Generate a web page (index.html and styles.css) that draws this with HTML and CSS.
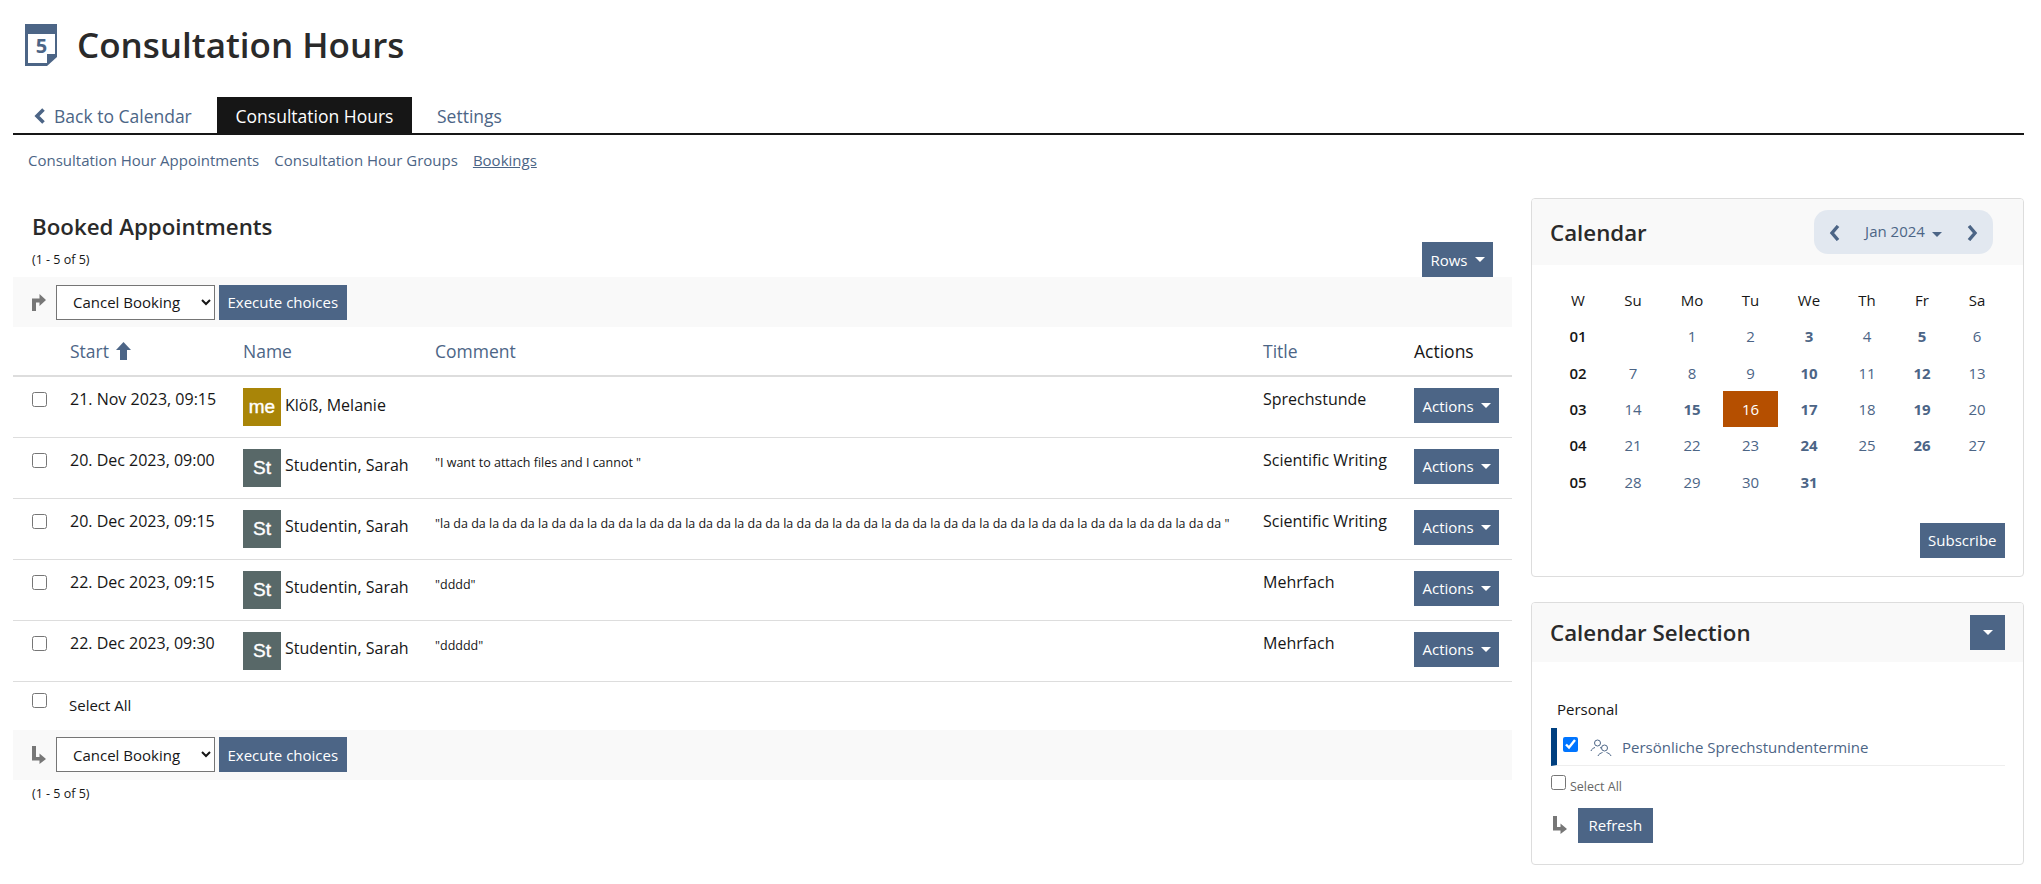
FILE: index.html
```html
<!DOCTYPE html>
<html lang="en">
<head>
<meta charset="utf-8">
<title>Consultation Hours</title>
<link rel="stylesheet" href="styles.css">
</head>
<body>
<svg class="defs" width="0" height="0">
  <symbol id="chev-l" viewBox="0 0 12 16"><path d="M9 1 3 8l6 7" fill="none" stroke="currentColor" stroke-width="3.400"/></symbol>
  <symbol id="chev-r" viewBox="0 0 12 16"><path d="M3 1l6 7-6 7" fill="none" stroke="currentColor" stroke-width="3.400"/></symbol>
</svg>

<header class="page-title">
  <svg class="title-icon" viewBox="0 0 32 42" aria-hidden="true">
    <path d="M0 0h32v33l-10 9H0z" fill="#4c6586"/>
    <path d="M3 10h27v20h-8v9H3z" fill="#fff"/>
    <text class="title-icon-num" x="16.500" y="29" text-anchor="middle">5</text>
  </svg>
  <h1>Consultation Hours</h1>
</header>

<nav class="tabs">
  <a class="tab tab-back"><svg class="back-chev" viewBox="0 0 12 16"><path d="M9.500 1.500 3 8l6.500 6.500" fill="none" stroke="currentColor" stroke-width="3.600"/></svg>Back to Calendar</a>
  <a class="tab tab-active">Consultation Hours</a>
  <a class="tab">Settings</a>
</nav>
<nav class="subtabs">
  <a>Consultation Hour Appointments</a>
  <a>Consultation Hour Groups</a>
  <a class="current">Bookings</a>
</nav>

<div class="columns">
  <main class="main">
    <div class="table-head">
      <div>
        <h2>Booked Appointments</h2>
        <div class="count">(1 - 5 of 5)</div>
      </div>
      <button class="btn">Rows<span class="caret"></span></button>
    </div>
    <div class="toolbar">
      <svg class="turn" viewBox="0 0 16 18"><path d="M2 18V5.500h7.500V1L16 7l-6.500 6V9.500H6V18z" fill="#777"/></svg>
      <select class="action-select"><option>Cancel Booking</option></select>
      <button class="btn">Execute choices</button>
    </div>
    <table class="bookings">
      <colgroup>
        <col class="c-check"><col class="c-start"><col class="c-name"><col class="c-comment"><col class="c-title"><col class="c-actions">
      </colgroup>
      <thead>
        <tr>
          <th></th>
          <th>Start <svg class="sort" viewBox="0 0 15 18"><path d="M7.500 0 15 8h-4v10H4V8H0z" fill="#4c6586"/></svg></th>
          <th>Name</th>
          <th>Comment</th>
          <th>Title</th>
          <th class="dark">Actions</th>
        </tr>
      </thead>
      <tbody>
        <tr>
          <td><input type="checkbox" class="cb"></td>
          <td>21. Nov 2023, 09:15</td>
          <td><div class="person"><span class="avatar gold">me</span><span class="person-name">Klöß, Melanie</span></div></td>
          <td class="comment"></td>
          <td>Sprechstunde</td>
          <td><button class="btn">Actions<span class="caret"></span></button></td>
        </tr>
        <tr>
          <td><input type="checkbox" class="cb"></td>
          <td>20. Dec 2023, 09:00</td>
          <td><div class="person"><span class="avatar slate">St</span><span class="person-name">Studentin, Sarah</span></div></td>
          <td class="comment">"I want to attach files and I cannot "</td>
          <td>Scientific Writing</td>
          <td><button class="btn">Actions<span class="caret"></span></button></td>
        </tr>
        <tr>
          <td><input type="checkbox" class="cb"></td>
          <td>20. Dec 2023, 09:15</td>
          <td><div class="person"><span class="avatar slate">St</span><span class="person-name">Studentin, Sarah</span></div></td>
          <td class="comment">"la da da la da da la da da la da da la da da la da da la da da la da da la da da la da da la da da la da da la da da la da da la da da la da da "</td>
          <td>Scientific Writing</td>
          <td><button class="btn">Actions<span class="caret"></span></button></td>
        </tr>
        <tr>
          <td><input type="checkbox" class="cb"></td>
          <td>22. Dec 2023, 09:15</td>
          <td><div class="person"><span class="avatar slate">St</span><span class="person-name">Studentin, Sarah</span></div></td>
          <td class="comment">"dddd"</td>
          <td>Mehrfach</td>
          <td><button class="btn">Actions<span class="caret"></span></button></td>
        </tr>
        <tr>
          <td><input type="checkbox" class="cb"></td>
          <td>22. Dec 2023, 09:30</td>
          <td><div class="person"><span class="avatar slate">St</span><span class="person-name">Studentin, Sarah</span></div></td>
          <td class="comment">"ddddd"</td>
          <td>Mehrfach</td>
          <td><button class="btn">Actions<span class="caret"></span></button></td>
        </tr>
      </tbody>
    </table>
    <div class="select-all"><input type="checkbox" class="cb"><span>Select All</span></div>
    <div class="toolbar">
      <svg class="turn" viewBox="0 0 16 18"><path d="M2 0h4v11h3.500V7.500L16 13l-6.500 5v-3.500H2z" fill="#777"/></svg>
      <select class="action-select"><option>Cancel Booking</option></select>
      <button class="btn">Execute choices</button>
    </div>
    <div class="count count-bottom">(1 - 5 of 5)</div>
  </main>

  <aside class="side">
    <section class="card">
      <div class="card-head cal-head">
        <h3>Calendar</h3>
        <div class="month-nav">
          <svg class="nav-chev"><use href="#chev-l"/></svg>
          <span class="month">Jan 2024<span class="caret"></span></span>
          <svg class="nav-chev"><use href="#chev-r"/></svg>
        </div>
      </div>
      <div class="cal-body">
        <table class="cal">
          <thead>
            <tr><th>W</th><th>Su</th><th>Mo</th><th>Tu</th><th>We</th><th>Th</th><th>Fr</th><th>Sa</th></tr>
          </thead>
          <tbody>
            <tr><th>01</th><td></td><td>1</td><td>2</td><td class="has">3</td><td>4</td><td class="has">5</td><td>6</td></tr>
            <tr><th>02</th><td>7</td><td>8</td><td>9</td><td class="has">10</td><td>11</td><td class="has">12</td><td>13</td></tr>
            <tr><th>03</th><td>14</td><td class="has">15</td><td class="today">16</td><td class="has">17</td><td>18</td><td class="has">19</td><td>20</td></tr>
            <tr><th>04</th><td>21</td><td>22</td><td>23</td><td class="has">24</td><td>25</td><td class="has">26</td><td>27</td></tr>
            <tr><th>05</th><td>28</td><td>29</td><td>30</td><td class="has">31</td><td></td><td></td><td></td></tr>
          </tbody>
        </table>
        <div class="cal-foot"><button class="btn">Subscribe</button></div>
      </div>
    </section>

    <section class="card">
      <div class="card-head sel-head">
        <h3>Calendar Selection</h3>
        <button class="btn btn-square"><span class="caret"></span></button>
      </div>
      <div class="sel-body">
        <div class="group-label">Personal</div>
        <div class="cal-row">
          <input type="checkbox" class="cb" checked>
          <svg class="people" viewBox="0 0 22 18" aria-hidden="true">
            <g fill="none" stroke="#4c6586" stroke-width="1">
              <circle cx="7.500" cy="4" r="3"/>
              <path d="M1 12c.5-2 2.500-3 4-3.500M10 8.500l1 .5"/>
              <circle cx="14.500" cy="9" r="3"/>
              <path d="M8 17c.5-2 3-3 4.500-3.500M16.500 13.500c1.500.5 4 1.500 4.500 3.500"/>
            </g>
          </svg>
          <span class="cal-name">Persönliche Sprechstundentermine</span>
        </div>
        <label class="sel-all"><input type="checkbox" class="cb"><span>Select All</span></label>
        <div class="refresh-row">
          <svg class="turn turn-side" viewBox="0 0 16 18"><path d="M2 0h4v11h3.500V7.500L16 13l-6.500 5v-3.500H2z" fill="#777"/></svg>
          <button class="btn btn-refresh">Refresh</button>
        </div>
      </div>
    </section>
  </aside>
</div>
</body>
</html>
```

FILE: styles.css
```css
* { box-sizing: border-box; }
html, body { margin: 0; padding: 0; }
body {
  font-family: "Open Sans", sans-serif;
  font-size: 15px;
  color: #161616;
  background: #fff;
  padding-bottom: 18px;
}
.defs { position: absolute; }
h1, h2, h3 { margin: 0; }

.page-title {
  display: flex;
  align-items: center;
  height: 42px;
  margin: 24px 0 31px 25px;
  gap: 20px;
}
.title-icon { width: 32px; height: 42px; flex: none; }
.title-icon-num { font: 700 20px "Open Sans", sans-serif; fill: #4c6586; }
h1 { font-size: 35px; font-weight: 600; line-height: 42px; color: #2a2a2a; }

.tabs {
  display: flex;
  align-items: stretch;
  height: 38px;
  margin: 0 17px 0 13px;
  border-bottom: 2px solid #161616;
}
.tab {
  display: flex;
  align-items: center;
  padding: 2px 19px 0;
  font-size: 17.500px;
  color: #4c6586;
  white-space: nowrap;
}
.tab-back { padding-left: 21px; padding-right: 25px; width: 204px; }
.back-chev { width: 12px; height: 16px; margin-right: 8px; flex: none; }
.tab-active { background: #161616; color: #fff; width: 195px; justify-content: center; padding: 2px 0 0; margin-right: 6px; }

.subtabs {
  display: flex;
  gap: 15px;
  margin: 15px 0 0 28px;
  height: 20px;
  line-height: 20px;
  font-size: 15px;
  color: #4c6586;
}
.subtabs .current { text-decoration: underline; }

.columns {
  display: flex;
  gap: 19px;
  margin: 28px 17px 0 13px;
  align-items: flex-start;
}
.main { width: 1499px; flex: none; }
.side { flex: 1; display: flex; flex-direction: column; gap: 25px; }

.table-head {
  display: flex;
  justify-content: space-between;
  align-items: flex-end;
  padding: 14px 19px 0 19px;
  height: 79px;
}
h2 { font-size: 22.300px; font-weight: 600; line-height: 30px; color: #2a2a2a; }
.count { font-size: 12.500px; line-height: 16px; margin: 10px 0 9px 0; }
.count-bottom { margin: 6px 0 0 19px; }

.btn {
  display: inline-flex;
  align-items: center;
  justify-content: center;
  height: 35px;
  border: 0;
  border-radius: 0;
  padding: 0 8.500px;
  background: #4c6586;
  color: #fff;
  font: 400 15px "Open Sans", sans-serif;
  white-space: nowrap;
}
.btn-refresh { padding: 0 10.500px; }
.caret {
  display: inline-block;
  width: 0;
  height: 0;
  margin-left: 7px;
  border-top: 5px solid currentColor;
  border-left: 5px solid transparent;
  border-right: 5px solid transparent;
}

.toolbar {
  display: flex;
  align-items: center;
  height: 50px;
  background: #f9f9f9;
  padding-left: 17px;
}
.turn { width: 16px; height: 18px; flex: none; margin-right: 10px; }
.action-select {
  width: 159px;
  height: 35px;
  margin-right: 4px;
  padding-left: 12px;
  border: 1px solid #757575;
  border-radius: 0;
  background: #fff;
  color: #161616;
  font: 400 15px "Open Sans", sans-serif;
}

.bookings { width: 100%; border-collapse: collapse; table-layout: fixed; }
.c-check { width: 57px; }
.c-start { width: 173px; }
.c-name { width: 192px; }
.c-comment { width: 828px; }
.c-title { width: 151px; }
.bookings th {
  height: 49px;
  padding: 0;
  border-bottom: 2px solid #ddd;
  text-align: left;
  font-size: 17.500px;
  font-weight: 400;
  color: #4c6586;
  vertical-align: middle;
}
.bookings th.dark { color: #161616; }
.sort { width: 15px; height: 18px; vertical-align: -2px; margin-left: 2px; }
.bookings td {
  height: 61px;
  padding: 11px 0 0;
  border-bottom: 1px solid #ddd;
  vertical-align: top;
  font-size: 16px;
  line-height: 22px;
  white-space: nowrap;
}
.bookings td:first-child { padding: 15px 0 0 19px; }
.bookings td.comment { font-size: 12.500px; padding-top: 14px; }
.cb { width: 15px; height: 15px; margin: 0; display: block; }
.person { display: flex; align-items: center; gap: 4px; }
.person-name { margin-bottom: 5px; }
.avatar {
  display: flex;
  align-items: center;
  justify-content: center;
  width: 38px;
  height: 38px;
  color: #fff;
  font: 400 19px "Liberation Sans", sans-serif;
  -webkit-text-stroke: 0.4px #fff;
}
.gold { background: #a98508; }
.slate { background: #586868; }

.select-all {
  display: flex;
  height: 48px;
  padding: 11px 0 0 19px;
}
.select-all span { margin-left: 22px; font-size: 15px; line-height: 20px; padding-top: 2px; }

.card { border: 1px solid #ddd; border-radius: 4px; background: #fff; overflow: hidden; }
.card-head {
  display: flex;
  align-items: center;
  justify-content: space-between;
  background: #f9f9f9;
  padding: 0 18px 0 18px;
}
.cal-head { height: 66px; padding-right: 30px; }
.sel-head { height: 59px; }
h3 { font-size: 22.300px; font-weight: 600; color: #2a2a2a; }
.month-nav {
  display: flex;
  align-items: center;
  justify-content: space-between;
  width: 179px;
  height: 44px;
  padding: 0 15px;
  border-radius: 14px;
  background: #e2e8f0;
  color: #4c6586;
}
.nav-chev { width: 12px; height: 16px; margin-top: 2px; }
.month { font-size: 15px; margin-top: -3px; }
.cal-body { padding: 17px 18px 18px 19px; }
.cal { width: 453px; border-collapse: collapse; table-layout: fixed; }
.cal thead th:nth-child(1) { width: 54px; }
.cal thead th:nth-child(2) { width: 56px; }
.cal thead th:nth-child(3) { width: 62px; }
.cal thead th:nth-child(4) { width: 55px; }
.cal thead th:nth-child(5) { width: 62px; }
.cal thead th:nth-child(6) { width: 54px; }
.cal thead th:nth-child(7) { width: 56px; }
.cal thead th:nth-child(8) { width: 54px; }
.cal th, .cal td {
  padding: 0;
  height: 36.300px;
  text-align: center;
  vertical-align: middle;
  font-size: 15px;
}
.cal th { font-weight: 600; color: #161616; }
.cal thead th { font-weight: 500; }
.cal td { color: #4c6586; }
.cal td.has { font-weight: 700; }
.cal td.today { background: #b54f00; color: #fff; }
.cal-foot { display: flex; justify-content: flex-end; margin-top: 23px; }
.btn-square { width: 35px; padding: 0; }
.btn-square .caret { margin-left: 0; }

.sel-body { padding: 37px 18px 21px 19px; }
.group-label { padding-left: 6px; line-height: 20px; font-size: 15px; }
.cal-row {
  display: flex;
  align-items: center;
  height: 38px;
  margin-top: 9px;
  padding: 0 0 0 6px;
  border-left: 6px solid #004080;
  border-bottom: 1px solid #eee;
  color: #4c6586;
  font-size: 15px;
}
.cal-row .cb { accent-color: #0075ff; margin-top: -4px; }
.cal-name { margin-top: 2px; }
.people { width: 22px; height: 18px; margin: 4px 10px 0 12px; }
.sel-all { display: flex; margin-top: 9px; height: 21px; color: #666; font-size: 12.500px; }
.sel-all span { margin-left: 4px; line-height: 16px; padding-top: 4px; }
.refresh-row { display: flex; align-items: center; margin-top: 12px; }
.turn-side { margin-right: 11px; }
```
